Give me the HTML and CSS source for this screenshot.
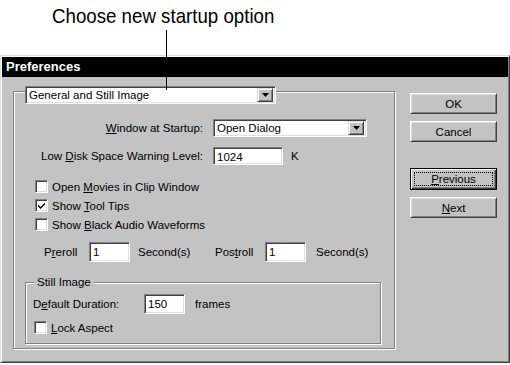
FILE: index.html
```html
<!DOCTYPE html>
<html lang="en">

<head>
    <meta charset="UTF-8">
    <title>Preferences</title>
    <link rel="stylesheet" href="styles.css">
</head>

<body>
    <div class="caption"><span>Choose new startup option</span></div>
    <div class="leader"></div>
    <div class="dialog">
        <div class="titlebar">Preferences</div>
        <div class="dlg-body">
            <div class="panel">
                <div class="combo combo-main">
                    <span class="combo-text">General and Still Image</span>
                    <span class="combo-btn"><svg width="7" height="4" viewBox="0 0 7 4"><path d="M0 0h7L3.5 4z" fill="#000"/></svg></span>
                </div>
                <div class="fields">
                    <div class="lbl"><u>W</u>indow at Startup:</div>
                    <div class="combo combo-start">
                        <span class="combo-text">Open Dialog</span>
                        <span class="combo-btn"><svg width="7" height="4" viewBox="0 0 7 4"><path d="M0 0h7L3.5 4z" fill="#000"/></svg></span>
                    </div>
                    <div class="lbl">Low <u>D</u>isk Space Warning Level:</div>
                    <div class="field-row"><span class="edit edit-disk">1024</span><span class="unit">K</span></div>
                </div>
                <div class="checks">
                    <div class="check"><span class="box"></span><span>Open <u>M</u>ovies in Clip Window</span></div>
                    <div class="check"><span class="box"><svg width="7" height="7" viewBox="0 0 7 7"><path d="M0 2.5l2.5 2.5L7 0.5v2L2.5 7 0 4.5z" fill="#000"/></svg></span><span>Show <u>T</u>ool Tips</span></div>
                    <div class="check"><span class="box"></span><span>Show <u>B</u>lack Audio Waveforms</span></div>
                </div>
                <div class="roll">
                    <span class="roll-pre">P<u>r</u>eroll</span>
                    <span class="edit edit-small">1</span>
                    <span class="roll-sec">Second(s)</span>
                    <span class="roll-post">Pos<u>t</u>roll</span>
                    <span class="edit edit-small">1</span>
                    <span class="roll-sec2">Second(s)</span>
                </div>
                <div class="group">
                    <div class="group-title"><span>Still Image</span></div>
                    <div class="dur">
                        <span class="dur-lbl">D<u>e</u>fault Duration:</span>
                        <span class="edit edit-small">150</span>
                        <span class="unit">frames</span>
                    </div>
                    <div class="check check-lock"><span class="box"></span><span><u>L</u>ock Aspect</span></div>
                </div>
            </div>
            <div class="buttons">
                <div class="btn">OK</div>
                <div class="btn">Cancel</div>
                <div class="btn btn-default"><span class="focus"><u>P</u>revious</span></div>
                <div class="btn"><u>N</u>ext</div>
            </div>
        </div>
    </div>
</body>

</html>
```

FILE: styles.css
```css
* {
    margin: 0;
    padding: 0;
    box-sizing: border-box;
}

body {
    width: 510px;
    height: 365px;
    background-color: #fff;
    font-family: "Liberation Sans", Arial, sans-serif;
    position: relative;
    overflow: hidden;
}

u {
    text-decoration: underline;
    text-underline-offset: 1px;
}

.caption {
    height: 55px;
    padding: 4px 0 0 52px;
}

.caption span {
    display: inline-block;
    font-size: 21px;
    color: #000;
    transform: scaleX(0.89);
    transform-origin: left;
}

.leader {
    position: absolute;
    left: 166px;
    top: 30px;
    width: 1px;
    height: 60px;
    background-color: #000;
    z-index: 5;
}

.dialog {
    width: 510px;
    height: 308px;
    background-color: #c3c3c3;
    border-top: 1px solid #dfdfdf;
    border-left: 1px solid #dfdfdf;
    border-right: 1px solid #404040;
    border-bottom: 1px solid #404040;
    box-shadow: inset 1px 1px #fff, inset -1px -1px #808080;
    padding: 1px;
    font-size: 11.5px;
    color: #000;
}

.titlebar {
    height: 20px;
    background-color: #000;
    color: #fff;
    font-weight: bold;
    font-size: 13px;
    line-height: 20px;
    padding-left: 4px;
}

.dlg-body {
    display: flex;
    padding: 14px 0 0 11px;
}

.panel {
    width: 382px;
    height: 258px;
    border: 1px solid #808080;
    box-shadow: inset 1px 1px #fff, 1px 1px #fff;
}

.combo {
    display: flex;
    align-items: center;
    height: 18px;
    background-color: #fff;
    border-top: 1px solid #808080;
    border-left: 1px solid #808080;
    border-right: 1px solid #fff;
    border-bottom: 1px solid #fff;
    box-shadow: inset 1px 1px #404040, inset -1px -1px #dfdfdf;
    padding: 2px;
}

.combo-text {
    flex: 1;
    padding-left: 1px;
    line-height: 14px;
}

.combo-btn {
    width: 16px;
    height: 14px;
    display: flex;
    align-items: center;
    justify-content: center;
    background-color: #c3c3c3;
    border-top: 1px solid #dfdfdf;
    border-left: 1px solid #dfdfdf;
    border-right: 1px solid #404040;
    border-bottom: 1px solid #404040;
    box-shadow: inset 1px 1px #fff, inset -1px -1px #808080;
}

.combo-main {
    width: 251px;
    margin: -6px 0 0 11px;
}

.fields {
    display: grid;
    grid-template-columns: 189px 154px;
    column-gap: 10px;
    row-gap: 10px;
    margin-top: 15px;
}

.lbl {
    text-align: right;
    align-self: center;
}

.field-row {
    display: flex;
    align-items: center;
}

.edit {
    display: block;
    height: 18px;
    line-height: 15px;
    padding: 2px 0 0 3px;
    background-color: #fff;
    border-top: 1px solid #808080;
    border-left: 1px solid #808080;
    border-right: 1px solid #fff;
    border-bottom: 1px solid #fff;
    box-shadow: inset 1px 1px #404040, inset -1px -1px #dfdfdf;
}

.edit-disk {
    width: 70px;
}

.edit-small {
    width: 41px;
    height: 20px;
}

.unit {
    margin-left: 8px;
}

.checks {
    margin: 12px 0 0 21px;
}

.check {
    display: flex;
    align-items: center;
    height: 19px;
}

.box {
    width: 13px;
    height: 13px;
    margin-right: 4px;
    display: flex;
    align-items: center;
    justify-content: center;
    background-color: #fff;
    border-top: 1px solid #808080;
    border-left: 1px solid #808080;
    border-right: 1px solid #fff;
    border-bottom: 1px solid #fff;
    box-shadow: inset 1px 1px #404040, inset -1px -1px #dfdfdf;
}

.roll {
    display: flex;
    align-items: center;
    height: 20px;
    margin: 8px 0 0 30px;
}

.roll-pre {
    width: 45px;
}

.roll-sec {
    width: 85px;
    padding-left: 8px;
}

.roll-post {
    width: 50px;
}

.roll-sec2 {
    padding-left: 10px;
}

.group {
    width: 356px;
    height: 62px;
    margin: 20px 0 0 11px;
    border: 1px solid #808080;
    box-shadow: inset 1px 1px #fff, 1px 1px #fff;
}

.group-title {
    height: 14px;
    margin-top: -8px;
    line-height: 14px;
}

.group-title span {
    background-color: #c3c3c3;
    margin-left: 8px;
    padding: 0 3px;
}

.dur {
    display: flex;
    align-items: center;
    margin: 5px 0 0 7px;
}

.dur-lbl {
    width: 111px;
}

.dur .unit {
    margin-left: 10px;
}

.check-lock {
    margin: 4px 0 0 8px;
}

.buttons {
    margin: 2px 0 0 15px;
    display: flex;
    flex-direction: column;
    gap: 7px;
}

.btn {
    width: 87px;
    height: 21px;
    display: flex;
    align-items: center;
    justify-content: center;
    background-color: #c3c3c3;
    border-top: 1px solid #fff;
    border-left: 1px solid #fff;
    border-right: 1px solid #404040;
    border-bottom: 1px solid #404040;
    box-shadow: inset 1px 1px #dfdfdf, inset -1px -1px #808080;
}

.btn-default {
    height: 22px;
    margin-top: 19px;
    border: 1px solid #000;
    box-shadow: inset 1px 1px #fff, inset -1px -1px #404040, inset -2px -2px #808080;
    padding: 3px;
}

.focus {
    display: flex;
    align-items: center;
    justify-content: center;
    width: 100%;
    height: 100%;
    border: 1px dotted #000;
}
```
